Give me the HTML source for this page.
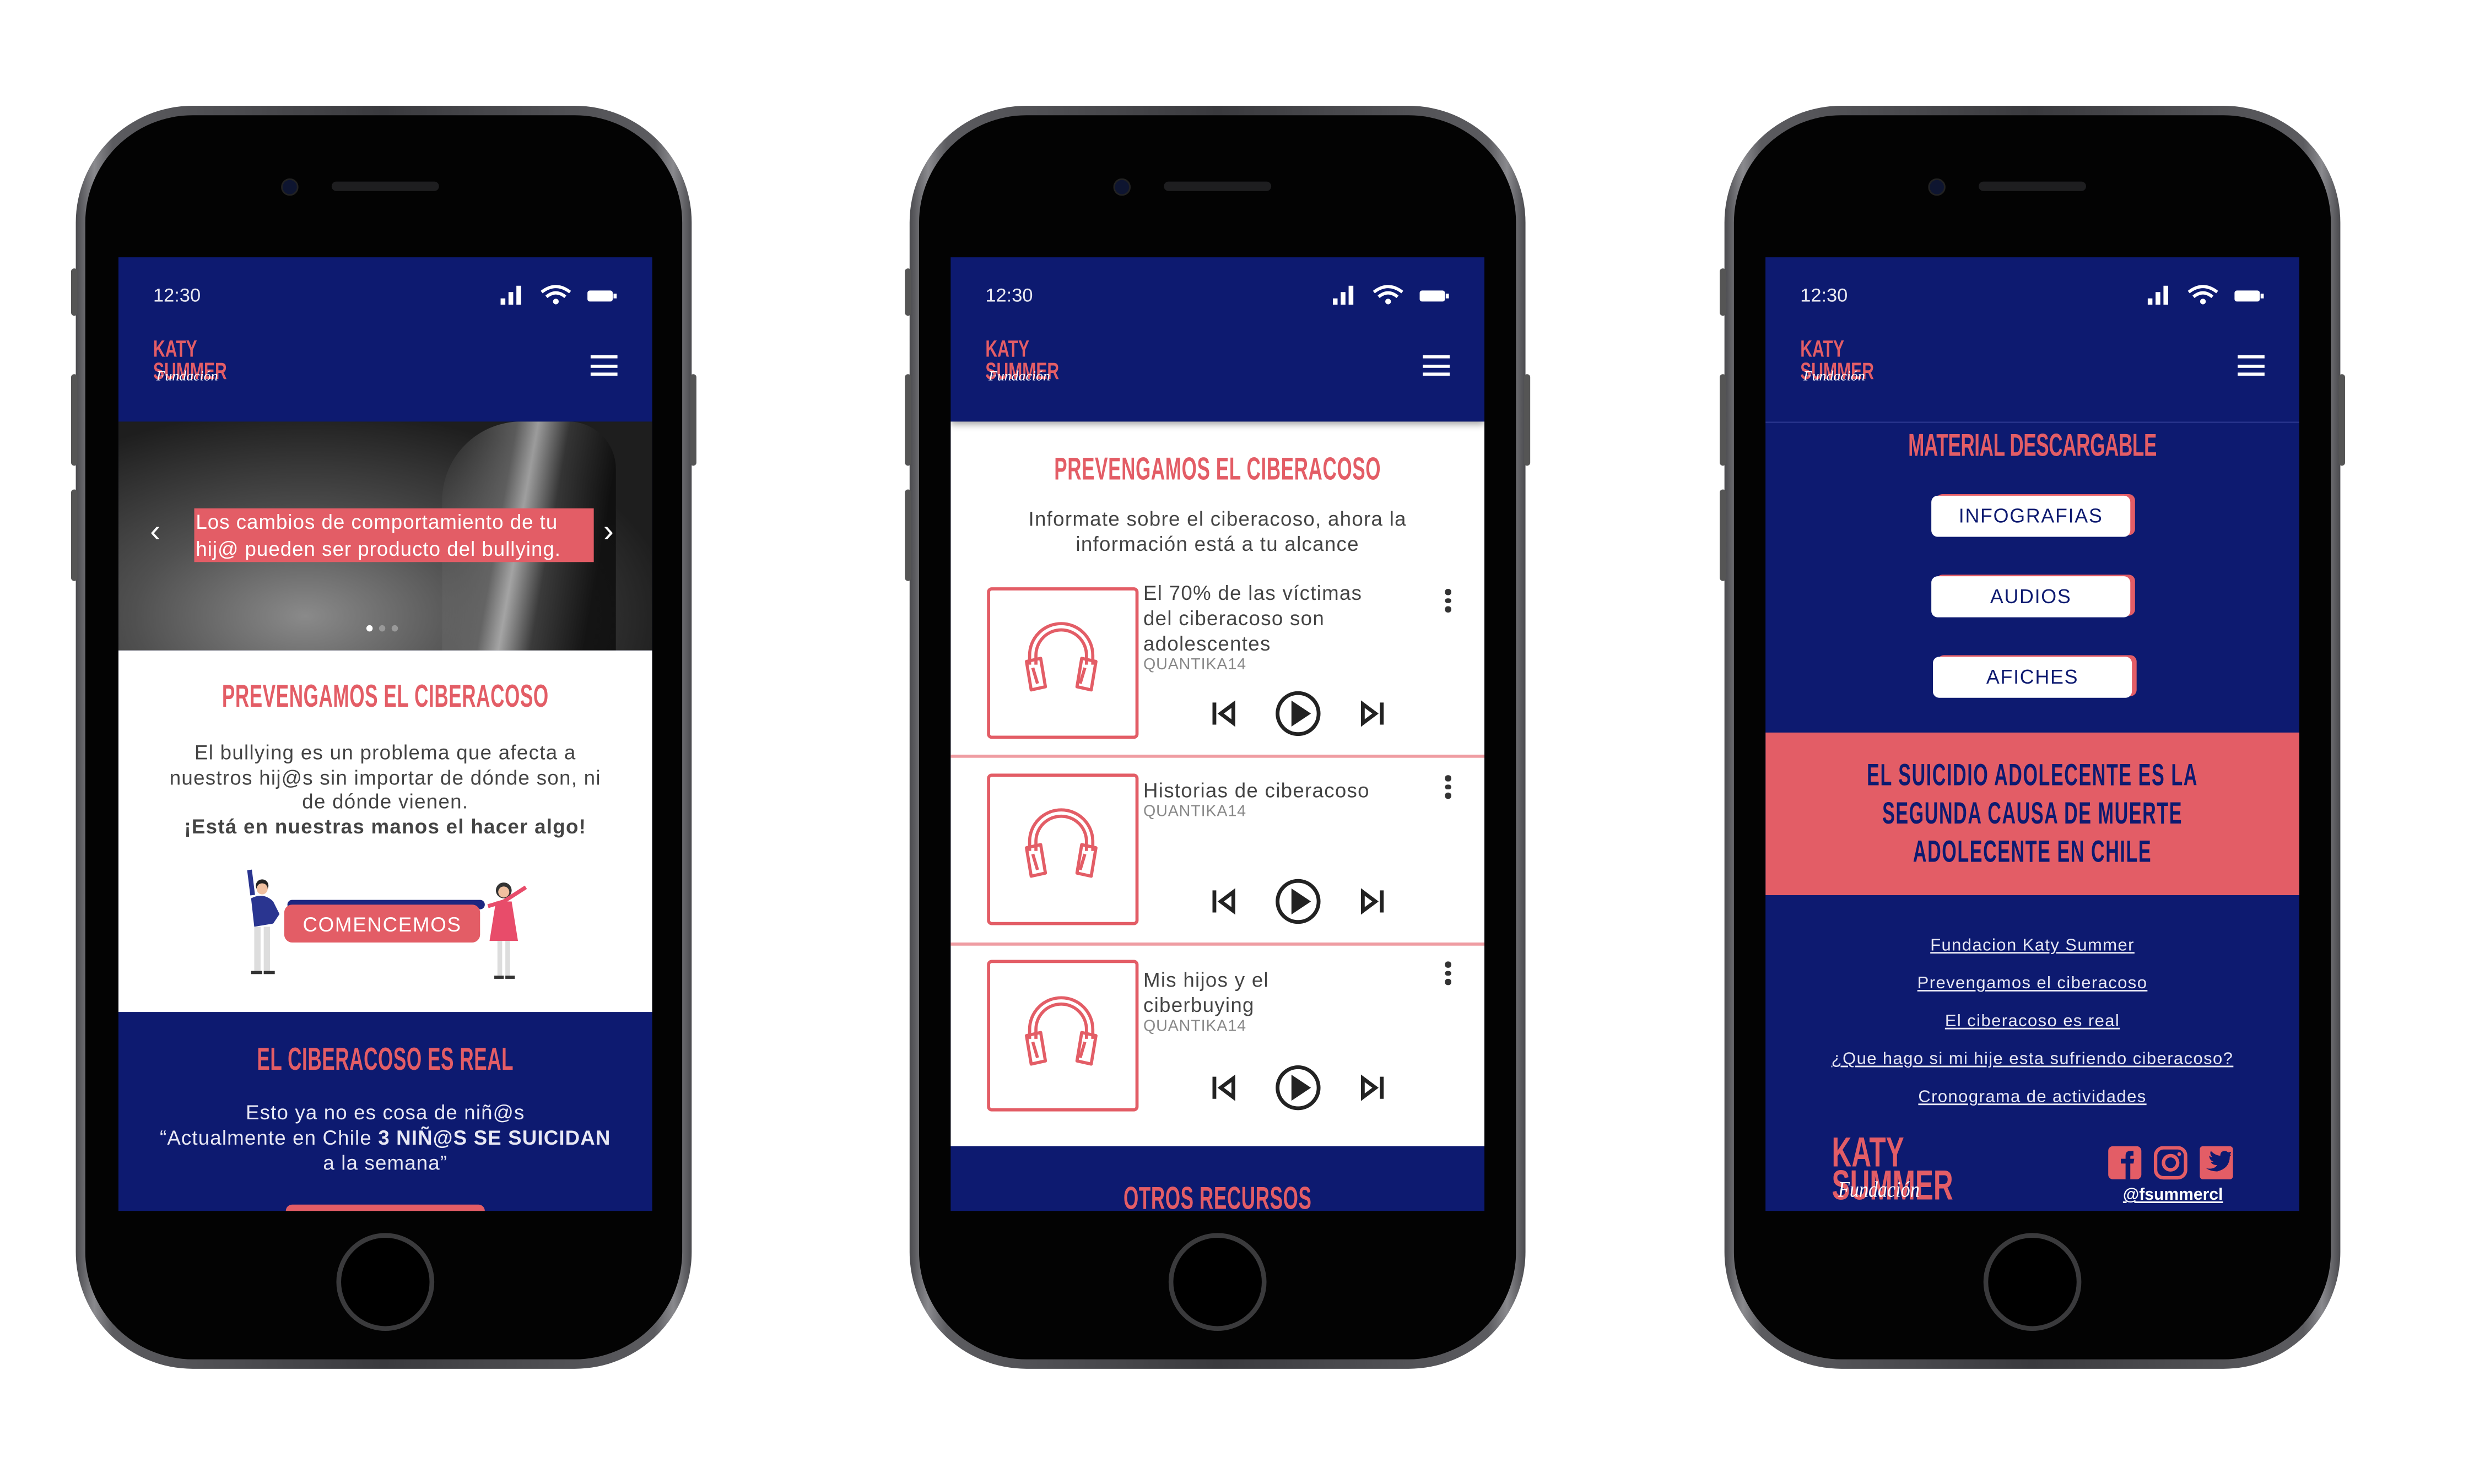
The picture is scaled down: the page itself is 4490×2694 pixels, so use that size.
<!DOCTYPE html>
<html><head><meta charset="utf-8">
<style>
html,body{margin:0;padding:0;background:#fff;}
body{width:4490px;height:2694px;overflow:hidden;position:relative;}
#w{position:absolute;left:0;top:0;width:1568px;height:940px;transform:scale(2.866);transform-origin:0 0;font-family:"Liberation Sans",sans-serif;}
.phone{position:absolute;top:67px;width:390px;height:800px;border-radius:74px;background:linear-gradient(90deg,#4a4a4e,#8a8a8e 3%,#5c5c60 6%,#3a3a3e 50%,#5c5c60 94%,#8a8a8e 97%,#4a4a4e);}
.phone .in{position:absolute;left:6px;top:6px;right:6px;bottom:6px;border-radius:68px;background:#030303;}
.btn{position:absolute;width:4px;background:#555;border-radius:2px;}
.cam{position:absolute;width:9px;height:9px;border-radius:50%;background:#0e1530;border:1px solid #222;}
.spk{position:absolute;width:68px;height:6px;border-radius:3px;background:#1e1e20;}
.home{position:absolute;width:56px;height:56px;border-radius:50%;border:3px solid #3a3a3c;background:#000;}
.scr{position:absolute;top:163px;width:338px;height:604px;overflow:hidden;background:#0d1a70;}
.time{position:absolute;left:22px;top:17px;color:#e8e8f0;font-size:12px;}
.hdr{position:absolute;left:0;top:0;width:338px;height:104px;background:#0d1a70;}
.ham{position:absolute;left:299px;top:62px;width:17px;height:13px;}
.ham i{display:block;height:2px;background:#fff;margin-bottom:3.5px;}
.cond{font-weight:bold;}
.t{position:absolute;left:0;width:338px;text-align:center;}
.ttl{color:#e35d66;font-size:18px;letter-spacing:0.3px;transform:scale(0.68,1.12);white-space:nowrap;}
.body{color:#444;font-size:12.8px;line-height:15.5px;letter-spacing:0.45px;}
.lg{position:absolute;}
.card{position:absolute;left:23px;width:92px;height:92px;border:2px solid #e35d66;border-radius:3px;background:#fff;}
.ct{position:absolute;left:122px;color:#444;font-size:12.8px;line-height:16px;letter-spacing:0.45px;}
.q{position:absolute;left:122px;color:#888;font-size:10px;letter-spacing:0.3px;}
.dots{position:absolute;left:313px;width:4px;}
.dots i{display:block;width:3.5px;height:3.5px;border-radius:50%;background:#333;margin-bottom:2px;}
.div{position:absolute;left:0;width:338px;height:1.5px;background:#ef9ca2;}
.wb{position:absolute;left:105px;width:126px;height:26px;background:#fff;border-radius:4px;box-shadow:3px -1px 0 #e35d66;color:#0d1a70;font-size:12.5px;text-align:center;line-height:27px;letter-spacing:0.6px;}
.lnk{color:#e8e8f4;font-size:10.8px;text-decoration:underline;letter-spacing:0.5px;}
.hcont{position:absolute;top:163px;width:338px;height:104px;}
.sig{position:absolute;left:242px;top:17px;}
.logo{position:absolute;left:22px;top:52px;width:60px;height:34px;}
.lk{color:#e35d66;font-size:15px;transform:scaleX(0.7);transform-origin:0 0;white-space:nowrap;}
</style></head><body><div id="w">

<div class="phone" style="left:48px"><div class="in"></div></div>
<div class="phone" style="left:576px"><div class="in"></div></div>
<div class="phone" style="left:1092px"><div class="in"></div></div>

<div class="btn" style="left:45px;top:170px;height:30px"></div>
<div class="btn" style="left:45px;top:237px;height:58px"></div>
<div class="btn" style="left:45px;top:310px;height:58px"></div>
<div class="btn" style="left:437px;top:237px;height:58px"></div>
<div class="btn" style="left:573px;top:170px;height:30px"></div>
<div class="btn" style="left:573px;top:237px;height:58px"></div>
<div class="btn" style="left:573px;top:310px;height:58px"></div>
<div class="btn" style="left:965px;top:237px;height:58px"></div>
<div class="btn" style="left:1089px;top:170px;height:30px"></div>
<div class="btn" style="left:1089px;top:237px;height:58px"></div>
<div class="btn" style="left:1089px;top:310px;height:58px"></div>
<div class="btn" style="left:1481px;top:237px;height:58px"></div>

<div class="cam" style="left:178px;top:113px"></div><div class="spk" style="left:210px;top:115px"></div>
<div class="cam" style="left:705px;top:113px"></div><div class="spk" style="left:737px;top:115px"></div>
<div class="cam" style="left:1221px;top:113px"></div><div class="spk" style="left:1253px;top:115px"></div>
<div class="home" style="left:213px;top:781px"></div>
<div class="home" style="left:740px;top:781px"></div>
<div class="home" style="left:1256px;top:781px"></div>

<!-- SCREEN 1 -->
<div class="scr" style="left:75px">
  <div style="position:absolute;left:0;top:104px;width:338px;height:145px;background:radial-gradient(ellipse at 35% 85%,#8a8a8a 0%,#505050 35%,#1e1e1e 75%);"></div>
  <div style="position:absolute;left:205px;top:104px;width:110px;height:145px;background:linear-gradient(100deg,rgba(20,20,20,0) 0%,#6a6a6a 35%,#bbb 45%,#3a3a3a 60%,#0c0c0c 85%);opacity:.8;border-radius:50px 30px 0 0"></div>
  <div style="position:absolute;left:48px;top:159px;width:253px;height:34px;background:#e35d66;"></div>
  <div style="position:absolute;left:49px;top:160px;width:260px;color:#fff;font-size:12.8px;line-height:16.5px;letter-spacing:0.35px;">Los cambios de comportamiento de tu hij@ pueden ser producto del bullying.</div>
  <div style="position:absolute;left:20px;top:163px;color:#fff;font-size:20px;">‹</div>
  <div style="position:absolute;left:307px;top:163px;color:#fff;font-size:20px;">›</div>
  <div style="position:absolute;left:157px;top:233px;width:4px;height:4px;border-radius:50%;background:#fff"></div>
  <div style="position:absolute;left:165px;top:233px;width:4px;height:4px;border-radius:50%;background:#999"></div>
  <div style="position:absolute;left:173px;top:233px;width:4px;height:4px;border-radius:50%;background:#999"></div>
  <div style="position:absolute;left:0;top:249px;width:338px;height:229px;background:#fff"></div>
  <div class="t cond ttl" style="top:268px">PREVENGAMOS EL CIBERACOSO</div>
  <div class="t body" style="top:306px">El bullying es un problema que afecta a<br>nuestros hij@s sin importar de dónde son, ni<br>de dónde vienen.<br><b>¡Está en nuestras manos el hacer algo!</b></div>
  <div style="position:absolute;left:107px;top:407px;width:125px;height:6px;background:#1d2680;border-radius:3px"></div>
  <div style="position:absolute;left:105px;top:410px;width:124px;height:24px;background:#e35d66;border-radius:5px;color:#fff;font-size:12.8px;text-align:center;line-height:25px;letter-spacing:0.6px">COMENCEMOS</div>
  <svg style="position:absolute;left:78px;top:386px" width="30" height="72" viewBox="0 0 30 72"><path d="M5 2 L7 18" stroke="#2a3590" stroke-width="3"/><circle cx="13" cy="12" r="4" fill="#222"/><circle cx="13" cy="14" r="3.5" fill="#f0c0a0"/><path d="M6 20 Q14 16 20 22 L24 30 L20 36 L8 38 Z" fill="#2a3590"/><rect x="8" y="38" width="4" height="28" fill="#ddd"/><rect x="14" y="38" width="4" height="28" fill="#ddd"/><rect x="6" y="66" width="7" height="2" fill="#333"/><rect x="14" y="66" width="7" height="2" fill="#333"/></svg>
  <svg style="position:absolute;left:230px;top:393px" width="32" height="66" viewBox="0 0 32 66"><circle cx="14" cy="8" r="5" fill="#333"/><circle cx="14" cy="9" r="3.5" fill="#f0c0a0"/><path d="M4 18 L14 15 L28 6" stroke="#e84c6a" stroke-width="2.5" fill="none"/><path d="M9 15 L19 15 L23 40 L5 40 Z" fill="#e84c6a"/><rect x="10" y="40" width="3" height="22" fill="#ddd"/><rect x="15" y="40" width="3" height="22" fill="#ddd"/><rect x="8" y="62" width="6" height="2" fill="#333"/><rect x="15" y="62" width="6" height="2" fill="#333"/></svg>
  <div class="t cond ttl" style="top:498px">EL CIBERACOSO ES REAL</div>
  <div class="t" style="top:534px;color:#e8e8f4;font-size:12.8px;line-height:16px;letter-spacing:0.4px">Esto ya no es cosa de niñ@s<br>“Actualmente en Chile <b>3 NIÑ@S SE SUICIDAN</b><br>a la semana”</div>
  <div style="position:absolute;left:106px;top:600px;width:126px;height:20px;background:#e35d66;border-radius:4px"></div>
  <div class="hdr"></div>
</div>

<!-- SCREEN 2 -->
<div class="scr" style="left:602px">
  <div style="position:absolute;left:0;top:104px;width:338px;height:459px;background:#fff"></div>
  <div class="t cond ttl" style="top:124px">PREVENGAMOS EL CIBERACOSO</div>
  <div class="t body" style="top:158px">Informate sobre el ciberacoso, ahora la<br>información está a tu alcance</div>
  <div class="card" style="top:209px"></div>
  <div class="ct" style="top:205px">El 70% de las víctimas<br>del ciberacoso son<br>adolescentes</div>
  <div class="q" style="top:253px">QUANTIKA14</div>
  <div class="dots" style="top:210px"><i></i><i></i><i></i></div>
  <div class="div" style="top:315px"></div>
  <div class="card" style="top:327px"></div>
  <div class="ct" style="top:330px">Historias de ciberacoso</div>
  <div class="q" style="top:346px">QUANTIKA14</div>
  <div class="dots" style="top:328px"><i></i><i></i><i></i></div>
  <div class="div" style="top:434px"></div>
  <div class="card" style="top:445px"></div>
  <div class="ct" style="top:450px">Mis hijos y el<br>ciberbuying</div>
  <div class="q" style="top:482px">QUANTIKA14</div>
  <div class="dots" style="top:446px"><i></i><i></i><i></i></div>
  <svg style="position:absolute;left:0;top:0" width="338" height="563" viewBox="0 0 338 563">
    <defs>
      <g id="hp" fill="none" stroke="#e35d66" stroke-width="2" stroke-linejoin="round">
        <path d="M-20 8 V2 A20 20 0 0 1 20 2 V8"/>
        <path d="M-16 8 V2 A16 16 0 0 1 16 2 V8"/>
        <path d="M-22 6 L-13 4 L-10 22 L-19 24 Z"/>
        <path d="M22 6 L13 4 L10 22 L19 24 Z"/>
        <path d="M-18 10 L-15 20 M15 10 L12 20"/>
      </g>
      <g id="ctl" fill="none" stroke="#222" stroke-width="2.4">
        <path d="M-53 -7 V7"/><path d="M-41 -6 L-49 0 L-41 6 Z"/>
        <circle cx="0" cy="0" r="13"/><path d="M-3 -6 L6 0 L-3 6 Z" fill="#222"/>
        <path d="M53 -7 V7"/><path d="M41 -6 L49 0 L41 6 Z"/>
      </g>
    </defs>
    <use href="#hp" x="70" y="250"/>
    <use href="#hp" x="70" y="368"/>
    <use href="#hp" x="70" y="487"/>
    <use href="#ctl" x="220" y="289"/>
    <use href="#ctl" x="220" y="408"/>
    <use href="#ctl" x="220" y="526"/>
  </svg>
  <div class="t cond ttl" style="top:586px">OTROS RECURSOS</div>
  <div class="hdr" style="box-shadow:0 2px 4px rgba(0,0,0,.35)"></div>
</div>

<!-- SCREEN 3 -->
<div class="scr" style="left:1118px">
  <div style="position:absolute;left:0;top:104px;width:338px;height:1px;background:#26328a"></div>
  <div class="t cond ttl" style="top:109px;letter-spacing:-0.2px">MATERIAL DESCARGABLE</div>
  <div class="wb" style="top:151px">INFOGRAFIAS</div>
  <div class="wb" style="top:202px">AUDIOS</div>
  <div class="wb" style="top:253px;left:106px">AFICHES</div>
  <div style="position:absolute;left:0;top:301px;width:338px;height:103px;background:#e35d66"></div>
  <div class="t cond" style="top:319px;color:#0d1a70;font-size:17.5px;line-height:22px;letter-spacing:0.8px;transform:scale(0.68,1.1);white-space:nowrap">EL SUICIDIO ADOLECENTE ES LA<br>SEGUNDA CAUSA DE MUERTE<br>ADOLECENTE EN CHILE</div>
  <div class="t lnk" style="top:430px">Fundacion Katy Summer</div>
  <div class="t lnk" style="top:454px">Prevengamos el ciberacoso</div>
  <div class="t lnk" style="top:478px">El ciberacoso es real</div>
  <div class="t lnk" style="top:502px">¿Que hago si mi hije esta sufriendo ciberacoso?</div>
  <div class="t lnk" style="top:526px">Cronograma de actividades</div>
  <div class="lg" style="left:42px;top:556px">
    <div class="cond lk" style="font-size:24px;line-height:21px;transform:scale(0.72,1.1)">KATY</div>
    <div class="cond lk" style="font-size:24px;line-height:21px;transform:scale(0.72,1.1)">SUMMER</div>
    <div style="position:absolute;left:4px;top:28px;color:#fff;font-family:'Liberation Serif',serif;font-style:italic;font-size:14px;transform:scaleX(0.85);transform-origin:0 0">Fundación</div>
  </div>
  <svg style="position:absolute;left:217px;top:563px" width="82" height="22" viewBox="0 0 82 22">
    <rect x="0" y="0" width="21" height="21" rx="3" fill="#e35d66"/>
    <path d="M11 21 V11 H8 V8 H11 V6 Q11 3 14 3 H16 V6 H14.5 Q14 6 14 7 V8 H16.5 L16 11 H14 V21" fill="#0d1a70"/>
    <rect x="30" y="1" width="19" height="19" rx="5" fill="none" stroke="#e35d66" stroke-width="2.2"/>
    <circle cx="39.5" cy="10.5" r="4.5" fill="none" stroke="#e35d66" stroke-width="2.2"/>
    <circle cx="45" cy="5" r="1.2" fill="#e35d66"/>
    <rect x="58" y="0" width="21" height="21" rx="2" fill="#e35d66"/>
    <path d="M62 14 Q67 15 69 12 Q66 12 65 10 Q66 10 67 10 Q64 9 64 6 Q65 7 66 7 Q64 5 65 3 Q68 6 71 6 Q71 3 74 3 Q75 3 76 4 L78 3.5 L77 5.5 L78 5.5 L77 6.5 Q77 14 69 16 Q65 16 62 14 Z" fill="#0d1a70"/>
  </svg>
  <div style="position:absolute;left:218px;top:588px;width:80px;text-align:center;color:#fff;font-size:10.5px;text-decoration:underline;font-weight:bold">@fsummercl</div>
  <div class="hdr"></div>
</div>

<div class="hcont" style="left:75px">
  <div class="time">12:30</div>
  <svg class="sig" width="76" height="14" viewBox="0 0 76 14"><rect x="0" y="9" width="3" height="4" fill="#fff"/><rect x="5" y="5" width="3" height="8" fill="#fff"/><rect x="10" y="1" width="3" height="12" fill="#fff"/><path d="M26 5 Q35 -2 44 5" stroke="#fff" stroke-width="2" fill="none"/><path d="M29 8 Q35 3 41 8" stroke="#fff" stroke-width="2" fill="none"/><circle cx="35" cy="11" r="1.8" fill="#fff"/><rect x="55" y="4" width="16" height="7" rx="1.5" fill="#fff"/><rect x="71.5" y="6" width="2" height="3" fill="#fff"/></svg>
  <div class="logo"><div class="cond lk" style="line-height:14px">KATY</div><div class="cond lk" style="line-height:14px">SUMMER</div><div style="position:absolute;left:2px;top:18px;color:#fff;font-family:'Liberation Serif',serif;font-style:italic;font-size:9px">Fundación</div></div>
  <div class="ham"><i></i><i></i><i></i></div>
</div>
<div class="hcont" style="left:602px">
  <div class="time">12:30</div>
  <svg class="sig" width="76" height="14" viewBox="0 0 76 14"><rect x="0" y="9" width="3" height="4" fill="#fff"/><rect x="5" y="5" width="3" height="8" fill="#fff"/><rect x="10" y="1" width="3" height="12" fill="#fff"/><path d="M26 5 Q35 -2 44 5" stroke="#fff" stroke-width="2" fill="none"/><path d="M29 8 Q35 3 41 8" stroke="#fff" stroke-width="2" fill="none"/><circle cx="35" cy="11" r="1.8" fill="#fff"/><rect x="55" y="4" width="16" height="7" rx="1.5" fill="#fff"/><rect x="71.5" y="6" width="2" height="3" fill="#fff"/></svg>
  <div class="logo"><div class="cond lk" style="line-height:14px">KATY</div><div class="cond lk" style="line-height:14px">SUMMER</div><div style="position:absolute;left:2px;top:18px;color:#fff;font-family:'Liberation Serif',serif;font-style:italic;font-size:9px">Fundación</div></div>
  <div class="ham"><i></i><i></i><i></i></div>
</div>
<div class="hcont" style="left:1118px">
  <div class="time">12:30</div>
  <svg class="sig" width="76" height="14" viewBox="0 0 76 14"><rect x="0" y="9" width="3" height="4" fill="#fff"/><rect x="5" y="5" width="3" height="8" fill="#fff"/><rect x="10" y="1" width="3" height="12" fill="#fff"/><path d="M26 5 Q35 -2 44 5" stroke="#fff" stroke-width="2" fill="none"/><path d="M29 8 Q35 3 41 8" stroke="#fff" stroke-width="2" fill="none"/><circle cx="35" cy="11" r="1.8" fill="#fff"/><rect x="55" y="4" width="16" height="7" rx="1.5" fill="#fff"/><rect x="71.5" y="6" width="2" height="3" fill="#fff"/></svg>
  <div class="logo"><div class="cond lk" style="line-height:14px">KATY</div><div class="cond lk" style="line-height:14px">SUMMER</div><div style="position:absolute;left:2px;top:18px;color:#fff;font-family:'Liberation Serif',serif;font-style:italic;font-size:9px">Fundación</div></div>
  <div class="ham"><i></i><i></i><i></i></div>
</div>

</div></body></html>
